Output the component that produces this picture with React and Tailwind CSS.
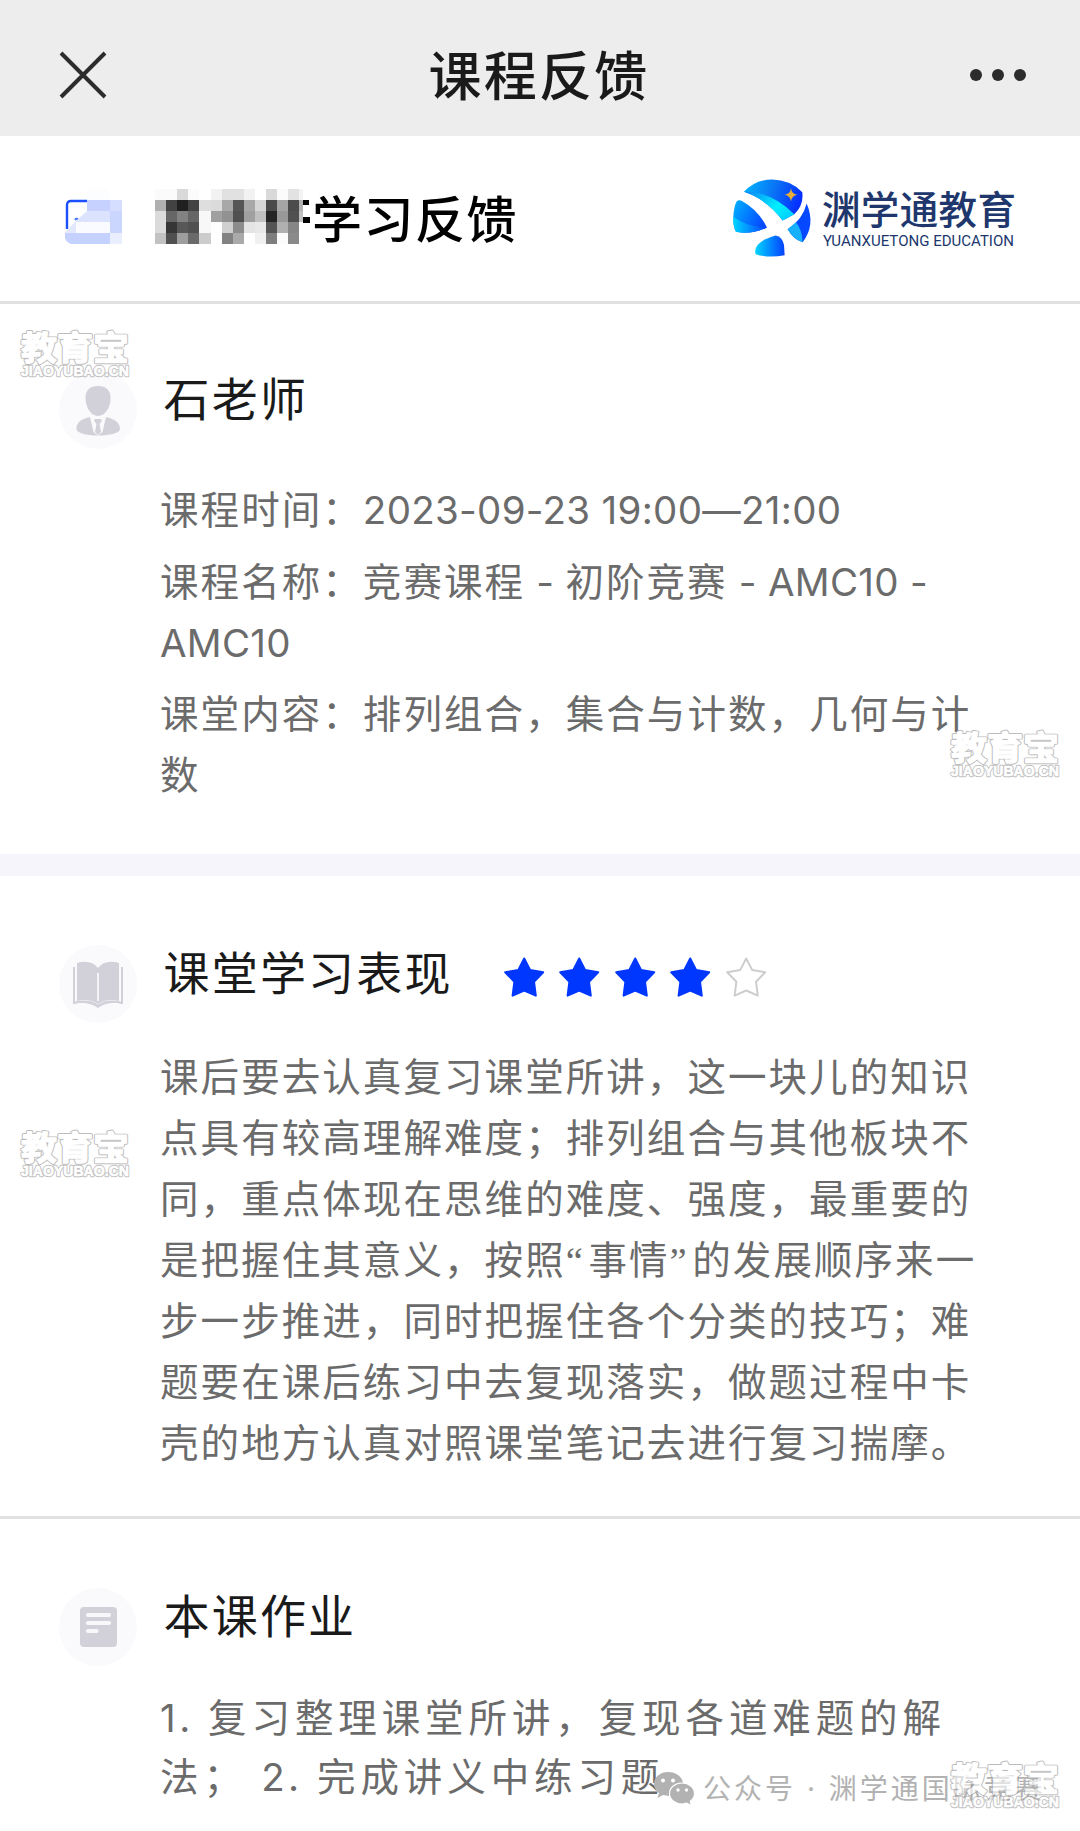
import clsx from 'clsx'

const INFO = [
  ['课程时间：2023-09-23 19:00—21:00'],
  ['课程名称：竞赛课程 - 初阶竞赛 - AMC10 -', 'AMC10'],
  ['课堂内容：排列组合，集合与计数，几何与计', '数'],
]

const PERFORMANCE = [
  '课后要去认真复习课堂所讲，这一块儿的知识',
  '点具有较高理解难度；排列组合与其他板块不',
  '同，重点体现在思维的难度、强度，最重要的',
  '是把握住其意义，按照“事情”的发展顺序来一',
  '步一步推进，同时把握住各个分类的技巧；难',
  '题要在课后练习中去复现落实，做题过程中卡',
  '壳的地方认真对照课堂笔记去进行复习揣摩。',
]

const HOMEWORK = ['1. 复习整理课堂所讲，复现各道难题的解', '法； 2. 完成讲义中练习题']

// grey levels of the masked student name, row by row
const MASK = [
  [251, 251, 217, 251, 255, 242, 225, 225, 242, 255, 217, 251, 226, 243],
  [176, 66, 32, 66, 222, 219, 168, 85, 168, 214, 74, 166, 76, 176],
  [219, 102, 130, 102, 248, 160, 146, 80, 160, 192, 36, 152, 80, 192],
  [219, 54, 88, 80, 248, 254, 208, 140, 228, 232, 84, 176, 134, 255],
  [194, 80, 158, 106, 204, 255, 130, 170, 255, 240, 126, 251, 138, 255],
]

export default function App() {
  return (
    <div className="relative w-[1080px] h-[1831px] overflow-hidden bg-white font-['Inter','Noto_Sans_CJK_SC',sans-serif] text-[#1a1a1a]">
      <NavBar />

      <header className="h-[168px] flex items-center justify-between pl-16 pr-16 pb-1 border-b-3 border-[#e1e1e1]">
        <div className="flex items-center">
          <FolderIcon />
          <MaskedName />
          <h1 className="ml-[1px] pt-[6px] text-[50px] leading-none tracking-[1.5px] font-medium text-black whitespace-nowrap">学习反馈</h1>
        </div>
        <Logo />
      </header>

      <section className="h-[550px] pt-[67px]">
        <SectionHead title="石老师" icon={<TeacherIcon />} />
        <div className="mt-[30px] flex flex-col gap-[10.5px]">
          {INFO.map((lines) => <Lines key={lines[0]} lines={lines} />)}
        </div>
      </section>

      <div className="h-[22px] bg-[#f5f5fb]" />

      <section className="h-[643px] pt-[69px] border-b-3 border-[#e1e1e1]">
        <SectionHead title="课堂学习表现" icon={<BookIcon />}>
          <div className="flex gap-[13px] ml-[50px] mt-[11px]">
            {[1, 2, 3, 4, 5].map((n) => <Star key={n} filled={n <= 4} />)}
          </div>
        </SectionHead>
        <div className="mt-[23px]">
          <Lines lines={PERFORMANCE} />
        </div>
      </section>

      <section className="pt-[69px]">
        <SectionHead title="本课作业" icon={<NoteIcon />} />
        <div className="mt-[22px]">
          <Lines lines={HOMEWORK} wide />
        </div>
      </section>

      <div className="absolute left-[653px] top-[1767px] flex items-center text-[#b2b2b2]">
        <WechatIcon />
        <span className="ml-[8px] text-[28px] leading-[44px] tracking-[3px] whitespace-nowrap">公众号 · 渊学通国际竞赛</span>
      </div>

      <Watermark className="left-[16px] top-[324px]" />
      <Watermark className="left-[946px] top-[724px]" />
      <Watermark className="left-[16px] top-[1124px]" />
      <Watermark className="left-[946px] top-[1755px]" />
    </div>
  )
}

function NavBar() {
  return (
    <nav className="h-[136px] bg-[#ededed] pl-[58px] pr-[54px] pt-[14px] flex items-center justify-between">
      <svg className="w-[50px] h-[50px]" viewBox="0 0 50 50" fill="none" stroke="#2c2c2c" strokeWidth="4">
        <path d="M3 3l44 44M47 3L3 47" />
      </svg>
      <span className="pt-[4px] text-[53px] leading-none tracking-[2.3px] font-medium whitespace-nowrap">课程反馈</span>
      <svg className="w-[56px] h-3" viewBox="0 0 56 12" fill="#2c2c2c">
        <circle cx="6" cy="6" r="6" />
        <circle cx="28" cy="6" r="6" />
        <circle cx="50" cy="6" r="6" />
      </svg>
    </nav>
  )
}

function SectionHead({ title, icon, children }) {
  return (
    <div className="flex items-start pl-[59px] h-[79px]">
      <div className="w-[78px] h-[78px] rounded-full bg-[#fafafd] shrink-0">{icon}</div>
      <h2 className="ml-[26.5px] text-[46px] leading-[56px] tracking-[2.2px] whitespace-nowrap">{title}</h2>
      {children}
    </div>
  )
}

function Lines({ lines, wide }) {
  return (
    <div className={clsx('pl-[160px] text-[38.5px] text-[#6b6b6b] whitespace-pre', wide ? 'leading-[58.5px] tracking-[4.9px]' : 'leading-[61px] tracking-[2.07px]')}>
      {lines.map((line) => (
        <p key={line}>
          {line.split(/([\x20-\x7e—]+|[“”])/).map((part, i) => <Run key={i} text={part} wide={wide} />)}
        </p>
      ))}
    </div>
  )
}

// latin runs and quotes have their own spacing inside the Chinese text
function Run({ text, wide }) {
  if (/^[“”]$/.test(text)) return <span className="font-['Liberation_Serif'] leading-none tracking-[5.6px]">{text}</span>
  if (/^[\x20-\x7e—]+$/.test(text)) return <span className={wide ? 'tracking-[3.5px]' : 'tracking-[0.3px]'}>{text}</span>
  return text
}

function MaskedName() {
  return (
    <svg className="w-[156px] h-[55px] ml-[33px]" viewBox="0 0 156 55" shapeRendering="crispEdges">
      <path d="M148 11h6v5h-6zM146 28h9v6h-9z" fill="#000" />
      {MASK.map((row, y) => row.map((v, x) => (
        <rect key={`${x}-${y}`} x={x * 11.1} y={y * 11} width={x === 13 ? 4 : 11.1} height="11" fill={`rgb(${v},${v},${v})`} />
      )))}
    </svg>
  )
}

function FolderIcon() {
  return (
    <svg className="w-[58px] h-[55px]" viewBox="0 0 58 55">
      <path d="M3 40V16q0-4 4-4h18" fill="none" stroke="#1a50ff" strokeWidth="2.4" />
      <path d="M11 31q1-2 3-1" fill="none" stroke="#4a70ff" strokeWidth="2" />
      <path d="M23 0h22v11H23z" fill="#fcfdff" />
      <path d="M23 11h35v11H23z" fill="#c6d1ff" />
      <path d="M46 11h12v11H46z" fill="#d5deff" />
      <path d="M23 22h24v11H12v-1z" fill="#dbe3ff" />
      <path d="M12 32L0 44h12z" fill="#e2e9ff" />
      <path d="M12 33h35v11H12z" fill="#fafbff" />
      <path d="M46 22h12v22H46z" fill="#cbd6ff" />
      <path d="M1 44h46v11H7q-5-2-6-6z" fill="#c5d1ff" />
      <path d="M46 44h12v11H46z" fill="#eaefff" />
    </svg>
  )
}

function Logo() {
  return (
    <svg className="w-[284px] h-[80px] mt-[3px]" viewBox="0 0 284 80">
      <defs>
        <linearGradient id="logoTop" x1="0" y1="0" x2="1" y2="0.2">
          <stop offset="0" stopColor="#00b9ff" />
          <stop offset="0.55" stopColor="#0a73f5" />
          <stop offset="1" stopColor="#0531ff" />
        </linearGradient>
        <linearGradient id="logoBand" x1="0" y1="0" x2="1" y2="0.6">
          <stop offset="0" stopColor="#0a80f5" />
          <stop offset="0.7" stopColor="#00f0ff" />
          <stop offset="1" stopColor="#00d5ff" />
        </linearGradient>
        <linearGradient id="logoSide" x1="0" y1="0" x2="1" y2="0.5">
          <stop offset="0" stopColor="#00b4ff" />
          <stop offset="1" stopColor="#0648ff" />
        </linearGradient>
        <linearGradient id="logoFoot" x1="0" y1="0" x2="1" y2="0">
          <stop offset="0" stopColor="#00d5ff" />
          <stop offset="1" stopColor="#0540ff" />
        </linearGradient>
      </defs>
      <g transform="translate(1.3 1.5) scale(.3333) translate(-69 -60)">
        <path d="M101 97Q135 60 186 60Q240 61 276 98Q281 137 252 164L217 183Q170 120 101 97z" fill="url(#logoTop)" />
        <path d="M101 97Q180 93 252 164L217 183Q170 120 101 97z" fill="url(#logoBand)" />
        <path d="M79 126Q85 119 96 125Q144 151 170 204Q122 227 77 217Q69 205 69 174Q70 143 79 126z" fill="url(#logoSide)" />
        <path d="M69 172Q110 203 170 204Q122 227 77 217Q68 202 69 172z" fill="url(#logoFoot)" />
        <path d="M289 132Q317 197 277 248Q250 240 232 209Q277 181 289 132z" fill="#0548ff" />
        <path d="M257 188Q276 211 277 248Q250 240 232 209z" fill="#16b0fb" />
        <path d="M196 228Q216 232 221 256L223 287Q176 297 136 284Q126 248 196 228z" fill="url(#logoFoot)" />
        <path d="M242 86Q244 103 261 106Q244 109 242 126Q240 109 223 106Q240 103 242 86z" fill="#e9ae35" />
      </g>
      <g fill="#20376d">
        <text x="90" y="46" fontSize="38.5" fontWeight="500" textLength="194" className="font-['Noto_Sans_CJK_SC']">渊学通教育</text>
        <text x="91" y="67.500" fontSize="15.500" textLength="191" lengthAdjust="spacingAndGlyphs" className="font-['Roboto']">YUANXUETONG EDUCATION</text>
      </g>
    </svg>
  )
}

function TeacherIcon() {
  return (
    <svg className="size-full" viewBox="0 0 78 78" fill="#d2d1d9">
      <path d="M39 15c8 0 13 4 12.500 13 0 8-5 17-12.500 17S27 36 26.500 28C26 19 31 15 39 15z" />
      <path d="M31 46l8 18 8-18c9 2 14 6 14 12 0 4-10 6.500-22 6.500S17.500 62 17.500 58C17 52 22 48 31 46z" />
      <path d="M31 46l3.500 15 4.500 3.500 4.500-3.500L47 46l-8 3z" fill="#fafafd" />
      <path d="M36 48h6l1 2-2.500 3L42 61l-3 3-3-3 1.500-8L35 50z" />
    </svg>
  )
}

function BookIcon() {
  return (
    <svg className="size-full" viewBox="0 0 78 78" fill="#d2d1d9">
      <path d="M18 18q14-4 21 5v36q-8-6-21-3z" />
      <path d="M60 18q-14-4-21 5v36q8-6 21-3z" />
      <path d="M39 28v28" stroke="#f4f4f8" strokeWidth="2" />
      <path d="M15 22v36q17-4 24 3q7-7 24-3V22" fill="none" stroke="#d2d1d9" strokeWidth="2" />
      <path d="M14 57q17-3 25 3q8-6 25-3v1q-18-1-25 5q-7-6-25-5z" />
    </svg>
  )
}

function NoteIcon() {
  return (
    <svg className="size-full" viewBox="0 0 78 78">
      <rect x="21" y="19" width="37" height="40" rx="4" fill="#d2d1d9" />
      <path d="M29 27h21M29 35h21M29 43h8.500" stroke="#f8f8fb" strokeWidth="4.200" strokeLinecap="round" />
    </svg>
  )
}

function Star({ filled }) {
  return (
    <svg className="w-[42.500px] h-[42px]" viewBox="0 0 42.500 42">
      <path
        d="M21.200 2.500l6 11.600 13 2.200-9.200 9.400 1.800 14-11.600-5.200-11.600 5.200 1.800-14-9.200-9.400 13-2.200z"
        fill={filled ? '#0037ff' : 'none'}
        stroke={filled ? '#0037ff' : '#cdcdcd'}
        strokeWidth="2"
        strokeLinejoin="round"
      />
    </svg>
  )
}

function WechatIcon() {
  return (
    <svg className="w-[42px] h-[36px]" viewBox="0 0 42 36" fill="#b2b2b2">
      <path d="M15 1C7 1 1 6.500 1 13c0 4 2 7 5 9l-1.500 5 5.500-3 6 1c8 0 14-5 14-12S23 1 15 1z" />
      <path d="M29 12c-7 0-12.500 4.500-12.500 10.500S22 33 29 33l4.500-.8 5 2.300-1.200-4.200c2.500-2 4.200-4.500 4.200-7.800C41.500 16.500 36 12 29 12z" stroke="#fff" strokeWidth="1.200" />
      <g fill="#fff">
        <circle cx="10" cy="9.500" r="2" />
        <circle cx="20" cy="9.500" r="2" />
        <circle cx="25" cy="19" r="1.700" />
        <circle cx="33.500" cy="19" r="1.700" />
      </g>
    </svg>
  )
}

// outlined site mark: grey stroke below, white stroke and fill above it
function Watermark({ className }) {
  const layers = [
    { stroke: '#909090', big: 3.4, small: 2.4 },
    { stroke: '#ffffff', big: 1.4, small: 0.6 },
  ]
  return (
    <svg className={clsx('absolute w-[118px] h-[58px] opacity-60', className)} viewBox="0 0 118 58">
      {layers.map((l) => (
        <g key={l.stroke} fill="#fff" stroke={l.stroke} strokeLinejoin="round" fontWeight="700">
          <text x="5" y="37" fontSize="36" textLength="108" strokeWidth={l.big} transform="translate(0 1.5) scale(1 .92)" className="font-['Noto_Sans_CJK_SC']">教育宝</text>
          <text x="5" y="52" fontSize="14" textLength="108" lengthAdjust="spacingAndGlyphs" strokeWidth={l.small} className="font-['Liberation_Sans']">JIAOYUBAO.CN</text>
        </g>
      ))}
    </svg>
  )
}
